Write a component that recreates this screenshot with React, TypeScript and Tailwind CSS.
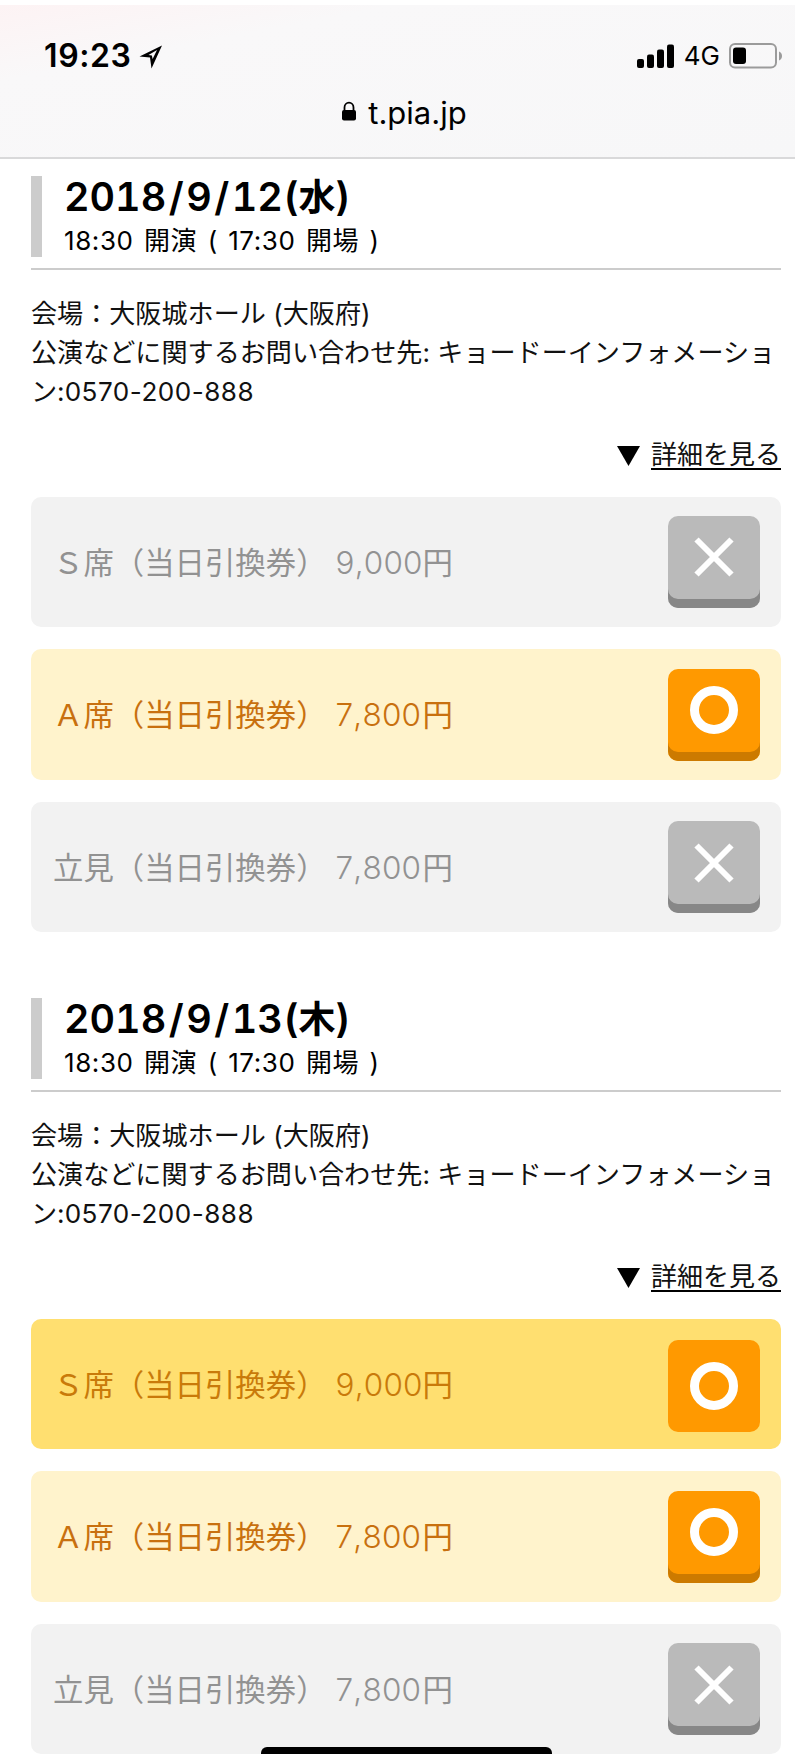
import React from 'react';
import clsx from 'clsx';

type SeatStatus = 'soldout' | 'available' | 'selected';

interface Seat {
    name: string;
    price: string;
    status: SeatStatus;
}

interface Performance {
    date: string;
    day: string;
    seats: Seat[];
}

const performances: Performance[] = [
    {
        date: '2018/9/12',
        day: '水',
        seats: [
            { name: 'Ｓ席', price: '9,000', status: 'soldout' },
            { name: 'Ａ席', price: '7,800', status: 'available' },
            { name: '立見', price: '7,800', status: 'soldout' },
        ],
    },
    {
        date: '2018/9/13',
        day: '木',
        seats: [
            { name: 'Ｓ席', price: '9,000', status: 'selected' },
            { name: 'Ａ席', price: '7,800', status: 'available' },
            { name: '立見', price: '7,800', status: 'soldout' },
        ],
    },
];

const BrowserHeader: React.FC = () => (
    <header className="mt-[5px] h-[154px] shrink-0 border-b-2 border-[#d9d9da] bg-[#f8f8f8] bg-linear-to-br from-[#fdf3f4] via-[#f9f8f9] via-25% to-[#f7f7f8] text-black">
        <div className="flex h-[100px] items-center justify-between pl-[44px] pr-[12px] pt-px">
            <div className="flex items-center">
                <span className="text-[32px] font-semibold leading-none tracking-[0.6px]">19:23</span>
                <svg className="ml-[7px] mt-[2px]" width="24" height="24" viewBox="0 0 24 24">
                    <path fillRule="evenodd" d="M23 0.500 0.500 11.500 11 12.500 12.500 23.500ZM18 5 9.500 10 12.900 10.500 13.600 14Z" fill="black" />
                </svg>
            </div>
            <div className="flex items-center">
                <svg width="38" height="24" viewBox="0 0 38 24" fill="black">
                    <rect x="0" y="15" width="7" height="9" rx="2" />
                    <rect x="10" y="10.500" width="7" height="13.500" rx="2" />
                    <rect x="20" y="5.500" width="7" height="18.500" rx="2" />
                    <rect x="30" y="0.500" width="7" height="23.500" rx="2" />
                </svg>
                <span className="ml-[9px] mt-px text-[26px] leading-none">4G</span>
                <svg className="ml-[9px]" width="54" height="26" viewBox="0 0 54 26">
                    <rect x="1" y="1" width="46" height="23.500" rx="5" fill="none" stroke="#9b9b9b" strokeWidth="2" />
                    <rect x="4" y="4.500" width="13" height="16.500" rx="3" fill="black" />
                    <path d="M50 8.500c4 1.500 4 7.500 0 9z" fill="#9b9b9b" />
                </svg>
            </div>
        </div>
        <div className="-mt-[6px] flex h-[25px] items-center justify-center pl-[14px]">
            <svg className="-mt-px" width="14" height="20" viewBox="0 0 14 20">
                <path d="M2.500 10V6.500a4.500 4.800 0 0 1 9 0V10" fill="none" stroke="black" strokeWidth="1.800" />
                <rect x="0" y="9" width="14" height="10.500" rx="2" fill="black" />
            </svg>
            <span className="ml-[12px] mt-px text-[31px] leading-none">t.pia.jp</span>
        </div>
    </header>
);

const StatusButton: React.FC<{ status: SeatStatus }> = ({ status }) => (
    <button
        className={clsx(
            'flex h-[92px] w-[92px] items-center justify-center rounded-[10px]',
            status === 'soldout' && 'bg-[#bababa] pb-[9px] shadow-[inset_0_-9px_0_#878787]',
            status === 'available' && 'bg-[#ff9900] pb-[9px] shadow-[inset_0_-9px_0_#cc7a00]',
            status === 'selected' && 'mt-[4px] bg-[#ff9900]'
        )}
    >
        {status === 'soldout' ? (
            <svg width="48" height="48" viewBox="0 0 48 48" stroke="white" strokeWidth="6">
                <path d="M6.500 6.500 41.500 41.500M41.500 6.500 6.500 41.500" />
            </svg>
        ) : (
            <svg width="48" height="48" viewBox="0 0 48 48" fill="none" stroke="white" strokeWidth="9">
                <circle cx="24" cy="24" r="19.500" />
            </svg>
        )}
    </button>
);

const SeatRow: React.FC<{ seat: Seat }> = ({ seat }) => (
    <li
        className={clsx(
            'flex h-[130.500px] items-center justify-between rounded-[10px] pl-[22px] pr-[21px]',
            seat.status === 'soldout' && 'bg-[#f2f2f2] text-[#929292]',
            seat.status === 'available' && 'bg-[#fff3cc] text-[#c8700f]',
            seat.status === 'selected' && 'bg-[#ffdf70] text-[#c97a0a]'
        )}
    >
        <div className="flex items-baseline pt-px text-[30.400px] leading-none">
            <span>{seat.name}（当日引換券）</span>
            <span className="ml-[9px] w-[87px] text-[31.500px] font-light tracking-[0.200px] [font-kerning:none]">
                {seat.price}
            </span>
            <span>円</span>
        </div>
        <StatusButton status={seat.status} />
    </li>
);

const PerformanceSection: React.FC<{ performance: Performance }> = ({ performance }) => {
    const [year, month, date] = performance.date.split('/');

    return (
        <section className="h-[822px] shrink-0">
            <div className="flex h-[93.500px] items-start border-b-2 border-[#cccccc]">
                <div className="h-[81px] w-[11px] bg-[#cccccc]" />
                <div className="pl-[22px]">
                    <h2 className="flex h-[43px] items-center whitespace-nowrap text-[39.500px] font-semibold leading-none">
                        <span className="tabular-nums">{year}</span>
                        <span className="mx-[2.500px]">/</span>
                        <span className="tabular-nums">{month}</span>
                        <span className="mx-[2.500px]">/</span>
                        <span className="tabular-nums">{date}</span>
                        <span className="ml-px">(</span>
                        <span className="text-[37px] font-bold">{performance.day}</span>
                        <span>)</span>
                    </h2>
                    <p className="flex h-[43px] items-center whitespace-pre text-[26px] leading-none tracking-[0.600px] [word-spacing:2.500px]">
                        18:30 開演 ( 17:30 開場 )
                    </p>
                </div>
            </div>
            <div className="mt-[24px] whitespace-pre text-[26.100px] leading-[39.200px] text-[#111]">
                <p>会場：大阪城ホール (大阪府)</p>
                <p>公演などに関するお問い合わせ先: キョードーインフォメーショ</p>
                <p>
                    ン:<span className="tracking-[0.500px]">0570-200-888</span>
                </p>
            </div>
            <div className="mt-[25px] flex h-[40px] items-center justify-end text-[26px] leading-none">
                <svg className="mr-[11px]" width="23" height="20" viewBox="0 0 23 20">
                    <path d="M0 0h23L11.500 20z" fill="black" />
                </svg>
                <a className="border-b-2 border-black text-[#111]">詳細を見る</a>
            </div>
            <ul className="mt-[20.500px] flex flex-col gap-[22.200px]">
                {performance.seats.map((seat) => (
                    <SeatRow key={seat.name} seat={seat} />
                ))}
            </ul>
        </section>
    );
};

const App: React.FC = () => (
    <div className="relative flex h-[1759px] w-[795px] flex-col overflow-hidden bg-white font-['Inter','Noto_Sans_CJK_JP',sans-serif] text-black">
        <BrowserHeader />
        <main className="flex flex-col pl-[31px] pr-[14px] pt-[17px]">
            {performances.map((performance) => (
                <PerformanceSection key={performance.date} performance={performance} />
            ))}
        </main>
        {/* home indicator */}
        <div className="absolute left-[261px] top-[1747px] h-[7px] w-[291px] rounded-t-[6px] bg-black" />
    </div>
);

export default App;
